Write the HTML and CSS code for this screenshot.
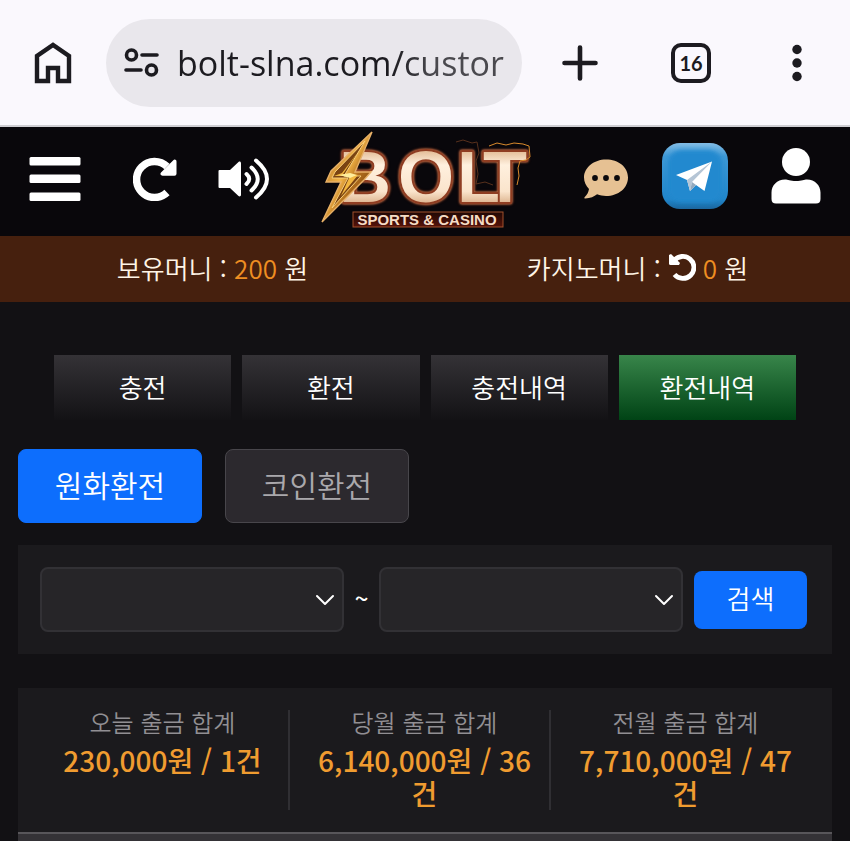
FILE: index.html
```html
<!DOCTYPE html>
<html lang="ko">
<head>
  <meta charset="UTF-8" />
  <meta name="viewport" content="width=device-width, initial-scale=1.0"/>
  <title>BOLT - 환전내역</title>
  <link rel="stylesheet" href="styles.css">
</head>
<body>
  <div class="browser-bar">
    <button class="icon-btn" aria-label="Home">
      <svg width="38" height="42" viewBox="0 0 38 42" fill="none" stroke="#1c1b20" stroke-width="4.4">
        <path d="M3 39V14L19 3l16 11v25H24V26H14v13z"/>
      </svg>
    </button>
    <div class="address">
      <svg width="36" height="30" viewBox="0 0 36 30" fill="none" stroke="#1c1b20" stroke-width="3.6">
        <circle cx="7.500" cy="7" r="5"/>
        <path d="M18 7h15M2 22h15" stroke-linecap="round"/>
        <circle cx="27.500" cy="22" r="5"/>
      </svg>
      <input class="address-input" type="text" aria-label="Address" value="bolt-slna.com/custor">
    </div>
    <button class="icon-btn" aria-label="New tab">
      <svg width="36" height="36" viewBox="0 0 36 36" stroke="#1c1b20" stroke-width="4.6" stroke-linecap="round">
        <path d="M18 2.500v31M2.500 18h31"/>
      </svg>
    </button>
    <button class="icon-btn" aria-label="Tabs"><span class="tab-count">16</span></button>
    <button class="icon-btn" aria-label="Menu">
      <svg width="10" height="38" viewBox="0 0 10 38" fill="#1c1b20">
        <circle cx="5" cy="5.500" r="4.700"/><circle cx="5" cy="19" r="4.700"/><circle cx="5" cy="32.500" r="4.700"/>
      </svg>
    </button>
  </div>

  <header class="site-header">
    <button class="icon-btn" aria-label="메뉴">
      <svg width="52" height="46" viewBox="0 0 52 46" fill="#fff">
        <rect x="0.500" y="1" width="51" height="8.500" rx="1.500"/>
        <rect x="0.500" y="18.500" width="51" height="8.500" rx="1.500"/>
        <rect x="0.500" y="36.500" width="51" height="8.500" rx="1.500"/>
      </svg>
    </button>
    <button class="icon-btn" aria-label="새로고침">
      <svg width="44" height="44" viewBox="0 0 44 44">
        <path d="M34 35.500A18 18 0 1 1 34 9.500" fill="none" stroke="#fff" stroke-width="7.500"/>
        <path d="M43.500 4.500v12.200a2 2 0 0 1-2 2H29.500c-2 0-2.700-2-1.500-3.200L40.300 3.200c1.200-1.200 3.200-.5 3.200 1.300z" fill="#fff"/>
      </svg>
    </button>
    <button class="icon-btn" aria-label="소리">
      <svg width="52" height="44" viewBox="0 0 52 44">
        <path d="M1.500 13H12L20.500 5c1-.9 2.500-.4 2.500 1.200v31.600c0 1.600-1.500 2.100-2.500 1.200L12 31H1.500Q.5 31 .5 30V14q0-1 1-1z" fill="#fff"/>
        <path d="M28.500 17q5.500 5 0 10M33.500 10.500q12.500 11.500 0 23M38 3.500q22 18.500 0 37" fill="none" stroke="#fff" stroke-width="4" stroke-linecap="round"/>
      </svg>
    </button>
    <a class="logo" href="#" aria-label="BOLT Sports &amp; Casino">
      <svg width="220" height="103" viewBox="0 0 220 103">
        <defs>
          <linearGradient id="cream" x1="0" y1="0" x2="0" y2="1">
            <stop offset="0.15" stop-color="#e0b68e"/>
            <stop offset=".35" stop-color="#fff0de"/>
            <stop offset=".68" stop-color="#fae4cc"/>
            <stop offset=".85" stop-color="#d8ad86"/>
          </linearGradient>
          <linearGradient id="gold" x1="0" y1="0" x2="1" y2="1">
            <stop offset="0" stop-color="#8a4a12"/>
            <stop offset=".45" stop-color="#f3b548"/>
            <stop offset=".6" stop-color="#b06d1c"/>
            <stop offset="1" stop-color="#5c2d0b"/>
          </linearGradient>
          <linearGradient id="plate" x1="0" y1="0" x2="0" y2="1">
            <stop offset="0" stop-color="#1f0805"/>
            <stop offset="1" stop-color="#571309"/>
          </linearGradient>
        </defs>
        <text class="logo-word" x="24 83 142 168" y="75">BOLT</text>
        <path d="M174 19l8-3 9 2 8-2 9 1 6 2 1 11-4 3-6 1-2 7 1 8-2 9" fill="none" stroke="#d98a2c" stroke-width="1"/>
        <path d="M141 15l7-2 9 3 5-1 2 11-3 8 2 13-2 10 9-2 8 3" fill="none" stroke="#57301c" stroke-width="1"/>
        <path d="M57 5L16 44l-5 11h15L7 95l42-42 7-8H40z" fill="url(#gold)" stroke="#e7b067" stroke-width="1.400"/>
        <path d="M50 14L20 45l-3 6h16L17 81l29-32H29z" fill="#7a4312" stroke="#f7cd7a" stroke-width="1"/>
        <path d="M43 25L27 46l-8 3h16l-9 20 17-21-15-1z" fill="#f2b740"/>
        <path d="M24 48l11-2 7 2-7 3z" fill="#ffed9c"/>
        <rect x="38" y="85" width="150" height="15" fill="url(#plate)" stroke="#a2502c" stroke-width="1"/>
        <text class="logo-sub" x="112" y="98">SPORTS &amp; CASINO</text>
      </svg>
    </a>
    <button class="icon-btn" aria-label="채팅">
      <svg width="46" height="42" viewBox="0 0 46 42">
        <path d="M23 1.500C11 1.500 1 9.500 1 19.500c0 4.500 2 8.500 5 11.500-.5 3-2 6-4.200 8-.8.800-.5 1.500.5 1.500 5 0 9-2 11.800-4.200C17 37.500 20 38 23 38c12.500 0 22-8 22-18.500S35.500 1.500 23 1.500z" fill="#e6c193"/>
        <circle cx="12" cy="20" r="2.900" fill="#0b090c"/><circle cx="23" cy="20" r="2.900" fill="#0b090c"/><circle cx="34" cy="20" r="2.900" fill="#0b090c"/>
      </svg>
    </button>
    <a class="icon-btn" href="#" aria-label="Telegram">
      <svg width="66" height="74" viewBox="0 0 66 74">
        <defs>
          <linearGradient id="tg" x1="0" y1="0" x2="0" y2="1">
            <stop offset="0" stop-color="#82bce5"/>
            <stop offset=".2" stop-color="#3e98d6"/>
            <stop offset=".85" stop-color="#2186cb"/>
            <stop offset="1" stop-color="#1b669e"/>
          </linearGradient>
          <filter id="soft"><feGaussianBlur stdDeviation="2"/></filter>
        </defs>
        <rect x="0" y="1" width="66" height="66" rx="18" fill="url(#tg)"/>
        <rect x="6" y="8" width="54" height="52" rx="14" fill="#2389cf" filter="url(#soft)"/>
        <path d="M50 19.500L14 33l11 5 3 11 6-6 8.500 6z" fill="#fff"/>
        <path d="M50 19.500L25 38l3 11 2-9z" fill="#b5c5d5"/>
        <path d="M30 40l-2 9 6-6z" fill="#92a9be"/>
      </svg>
    </a>
    <button class="icon-btn" aria-label="내 정보">
      <svg width="50" height="64" viewBox="0 0 50 64" fill="#fff">
        <circle cx="25" cy="15" r="14"/>
        <path d="M14 32.500c3 0 5 1.500 11 1.500s8-1.500 11-1.500c8 0 13.500 6 13.500 13V52q0 4.500-4.500 4.500H5Q.5 56.500.5 52v-6.500c0-7 5.500-13 13.500-13z"/>
      </svg>
    </button>
  </header>

  <div class="balance">
    <div>보유머니 : <span class="amount">200</span> 원</div>
    <div class="casino-money">카지노머니 :
      <button class="icon-btn" aria-label="카지노머니 새로고침">
        <svg width="28" height="28" viewBox="0 0 28 28">
          <path d="M6 8A11 11 0 1 1 6.500 21.500" fill="none" stroke="#fff" stroke-width="4.800"/>
          <path d="M1 2v8.500q0 1.500 1.500 1.500H11l1-2L3 1z" fill="#fff"/>
        </svg>
      </button>
      <span><span class="amount">0</span> 원</span>
    </div>
  </div>

  <main>
    <nav class="tabs">
      <a href="#">충전</a>
      <a href="#">환전</a>
      <a href="#">충전내역</a>
      <a href="#" class="active">환전내역</a>
    </nav>

    <div class="types">
      <button class="type active">원화환전</button>
      <button class="type">코인환전</button>
    </div>

    <form class="search">
      <select class="date" aria-label="시작일"><option></option></select>
      <span class="tilde">~</span>
      <select class="date" aria-label="종료일"><option></option></select>
      <button class="search-btn" type="button">검색</button>
    </form>

    <section class="history">
      <div class="totals">
        <div class="total">
          <div class="total-label">오늘 출금 합계</div>
          <div class="total-value">230,000원 / 1건</div>
        </div>
        <div class="total">
          <div class="total-label">당월 출금 합계</div>
          <div class="total-value">6,140,000원 / 36건</div>
        </div>
        <div class="total">
          <div class="total-label">전월 출금 합계</div>
          <div class="total-value">7,710,000원 / 47건</div>
        </div>
      </div>
      <div class="list-head"></div>
    </section>
  </main>
</body>
</html>
```
FILE: styles.css
```css
* {
  box-sizing: border-box;
}

body {
  margin: 0;
  background-color: #121114;
  color: #fff;
  font-family: "Noto Sans CJK KR", sans-serif;
  font-weight: 350;
}

button,
select,
input {
  font: inherit;
}

a {
  color: inherit;
  text-decoration: none;
}

svg {
  display: block;
}

.icon-btn {
  display: flex;
  align-items: center;
  justify-content: center;
  padding: 0;
  border: none;
  background: none;
  cursor: pointer;
}

/* browser bar */
.browser-bar {
  display: grid;
  grid-template-columns: 106px minmax(0, 1fr) 116px 106px 106px;
  align-items: center;
  height: 127px;
  border-bottom: 2px solid #cfced3;
  background-color: #faf8fd;
}

.address {
  display: flex;
  align-items: center;
  gap: 17px;
  height: 88px;
  padding: 0 17px 0 18px;
  border-radius: 44px;
  background-color: #e9e7ec;
}

.address svg {
  flex: none;
}

.address-input {
  flex: 1;
  min-width: 0;
  padding: 0;
  border: none;
  outline: none;
  background: linear-gradient(90deg, #1c1b20 65%, #4a494e 78%);
  -webkit-background-clip: text;
  background-clip: text;
  color: transparent;
  font-family: "Open Sans", sans-serif;
  font-size: 34px;
  font-weight: 400;
}

.tab-count {
  width: 40px;
  height: 40px;
  border: 4px solid #1c1b20;
  border-radius: 10px;
  color: #1c1b20;
  font-family: Lato, sans-serif;
  font-size: 20px;
  font-weight: 700;
  line-height: 32px;
}

/* site header */
.site-header {
  display: grid;
  grid-template-columns: 110fr 90fr 87fr 276fr 86fr 92fr 109fr;
  align-items: center;
  height: 109px;
  padding-bottom: 6px;
  background-color: #09070b;
}

.site-header > .icon-btn {
  height: 100px;
}

.logo {
  justify-self: center;
}

.logo text {
  font-family: "Liberation Sans", Arial, sans-serif;
  font-weight: 700;
}

.logo .logo-word {
  fill: url(#cream);
  stroke: #8f3d22;
  stroke-width: 4px;
  stroke-linejoin: round;
  paint-order: stroke;
  font-size: 72px;
  filter: drop-shadow(0 0 1px #d08a5c) drop-shadow(0 0 1px #7a2a16);
}

.logo .logo-sub {
  fill: #f5dcc5;
  font-size: 15px;
  text-anchor: middle;
}

/* balance */
.balance {
  display: grid;
  grid-template-columns: 1fr 1fr;
  align-items: center;
  height: 66px;
  padding-bottom: 4px;
  background-color: #46200e;
  color: #fff5e6;
  font-size: 26px;
  text-align: center;
}

.amount {
  color: #ee8e22;
}

.casino-money {
  display: flex;
  align-items: center;
  justify-content: center;
  gap: 7px;
}

/* content */
main {
  padding: 53px 18px 0;
}

.tabs {
  display: grid;
  grid-template-columns: repeat(4, 1fr);
  gap: 11px;
  padding: 0 36px;
}

.tabs a {
  padding-bottom: 2px;
  background: linear-gradient(#343236, #131215);
  font-size: 26px;
  line-height: 63px;
  text-align: center;
}

.tabs .active {
  background: linear-gradient(#38854a, #004315);
}

.types {
  display: flex;
  gap: 23px;
  margin-top: 29px;
}

.type {
  width: 184px;
  height: 74px;
  padding: 0 0 4px;
  border: 1px solid #48464b;
  border-radius: 8px;
  background-color: #2c292e;
  color: #aaa8ac;
  font-size: 30px;
  cursor: pointer;
}

.type.active {
  border-color: #0d6efd;
  background-color: #0d6efd;
  color: #fff;
}

.search {
  display: flex;
  align-items: center;
  margin-top: 22px;
  padding: 22px 25px 22px 22px;
  background-color: #1b1a1d;
}

.date {
  flex: 1;
  min-width: 0;
  height: 65px;
  border: 2px solid #323135;
  border-radius: 8px;
  appearance: none;
  background: #262528 url("data:image/svg+xml,%3Csvg xmlns='http://www.w3.org/2000/svg' width='20' height='12'%3E%3Cpath d='M2 2l8 8 8-8' fill='none' stroke='%23fff' stroke-width='2' stroke-linecap='round' stroke-linejoin='round'/%3E%3C/svg%3E") no-repeat right 7px center;
}

.tilde {
  width: 35px;
  padding-bottom: 4px;
  font-size: 24px;
  font-weight: 500;
  line-height: 32px;
  text-align: center;
}

.search-btn {
  width: 113px;
  height: 58px;
  margin-left: 11px;
  padding: 0 0 4px;
  border: none;
  border-radius: 8px;
  background-color: #0d6efd;
  color: #fff;
  font-size: 26px;
  cursor: pointer;
}

.history {
  margin-top: 34px;
  background-color: #1b1a1d;
}

.totals {
  display: grid;
  grid-template-columns: repeat(3, 1fr);
  padding: 22px 22px 22px 9px;
}

.total {
  padding: 0 16px 0 26px;
  text-align: center;
}

.total + .total {
  border-left: 2px solid #302f33;
}

.total-label {
  color: #918f93;
  font-size: 24px;
  line-height: 24px;
}

.total-value {
  margin-top: 10px;
  color: #f09c30;
  font-size: 28px;
  font-weight: 500;
  line-height: 33px;
  word-break: break-all;
}

.list-head {
  height: 9px;
  border-top: 2px solid #58565a;
  background-color: #343236;
}
```
